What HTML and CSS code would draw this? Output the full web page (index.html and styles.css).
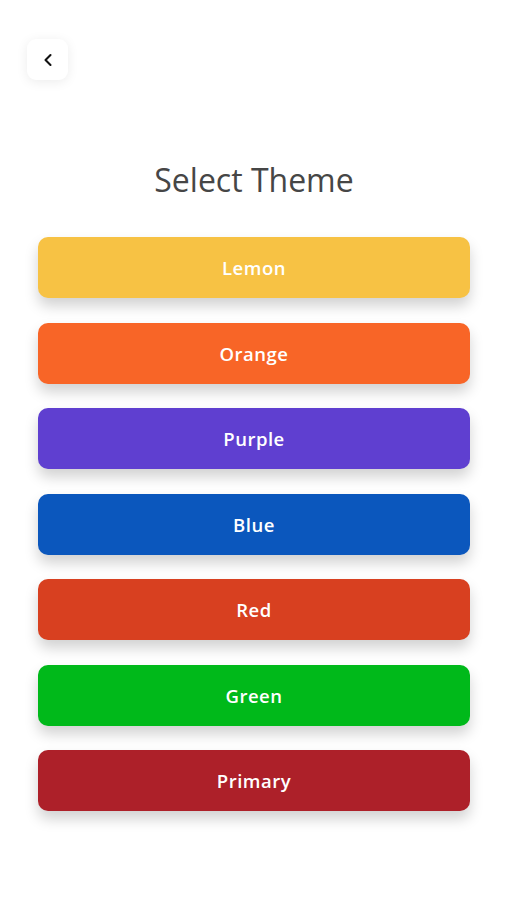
FILE: index.html
```html
<!DOCTYPE html>
<html lang="en">
<head>
    <meta charset="UTF-8">
    <meta name="viewport" content="width=device-width, initial-scale=1.0">
    <title>Select Theme</title>
    <link rel="stylesheet" href="styles.css">
</head>
<body>
    <div class="screen">
        <div class="top-bar">
            <!-- back button -->
            <button class="back-btn" aria-label="Back">
                <svg width="14" height="14" viewBox="0 0 14 14">
                    <path d="M9.5 2 L4.5 7 L9.5 12" fill="none" stroke="#111" stroke-width="2.1" stroke-linecap="round" stroke-linejoin="round"/>
                </svg>
            </button>
        </div>

        <h1 class="title">Select Theme</h1>

        <div class="themes">
            <button class="theme lemon">Lemon</button>
            <button class="theme orange">Orange</button>
            <button class="theme purple">Purple</button>
            <button class="theme blue">Blue</button>
            <button class="theme red">Red</button>
            <button class="theme green">Green</button>
            <button class="theme primary">Primary</button>
        </div>
    </div>
</body>
</html>
```

FILE: styles.css
```css
body {
    margin: 0;
    font-family: "Open Sans", Arial, sans-serif;
    background-color: #fff;
}

.screen {
    padding: 39px 37px 40px 38px;
}

.top-bar {
    display: flex;
    margin-left: -11px;
}

.back-btn {
    width: 41px;
    height: 41px;
    border: none;
    border-radius: 9px;
    background-color: #fff;
    box-shadow: 0 2px 12px rgba(0, 0, 0, 0.08);
    display: flex;
    align-items: center;
    justify-content: center;
    padding: 0;
    cursor: pointer;
}

.title {
    margin: 80px 0 37px;
    text-align: center;
    font-size: 32px;
    line-height: 40px;
    font-weight: 500;
    color: #464646;
}

.themes {
    display: flex;
    flex-direction: column;
    gap: 24.5px;
}

.theme {
    height: 61px;
    border: none;
    border-radius: 10px;
    color: #fff;
    font-family: "Open Sans", Arial, sans-serif;
    font-size: 18.5px;
    font-weight: 600;
    letter-spacing: 0.5px;
    box-shadow: 0 8px 14px rgba(0, 0, 0, 0.18);
    cursor: pointer;
}

.lemon { background-color: #f7c244; }
.orange { background-color: #f86527; }
.purple { background-color: #5f3fd0; }
.blue { background-color: #0b57bd; }
.red { background-color: #d84020; }
.green { background-color: #00b91a; }
.primary { background-color: #ad2029; }
```
